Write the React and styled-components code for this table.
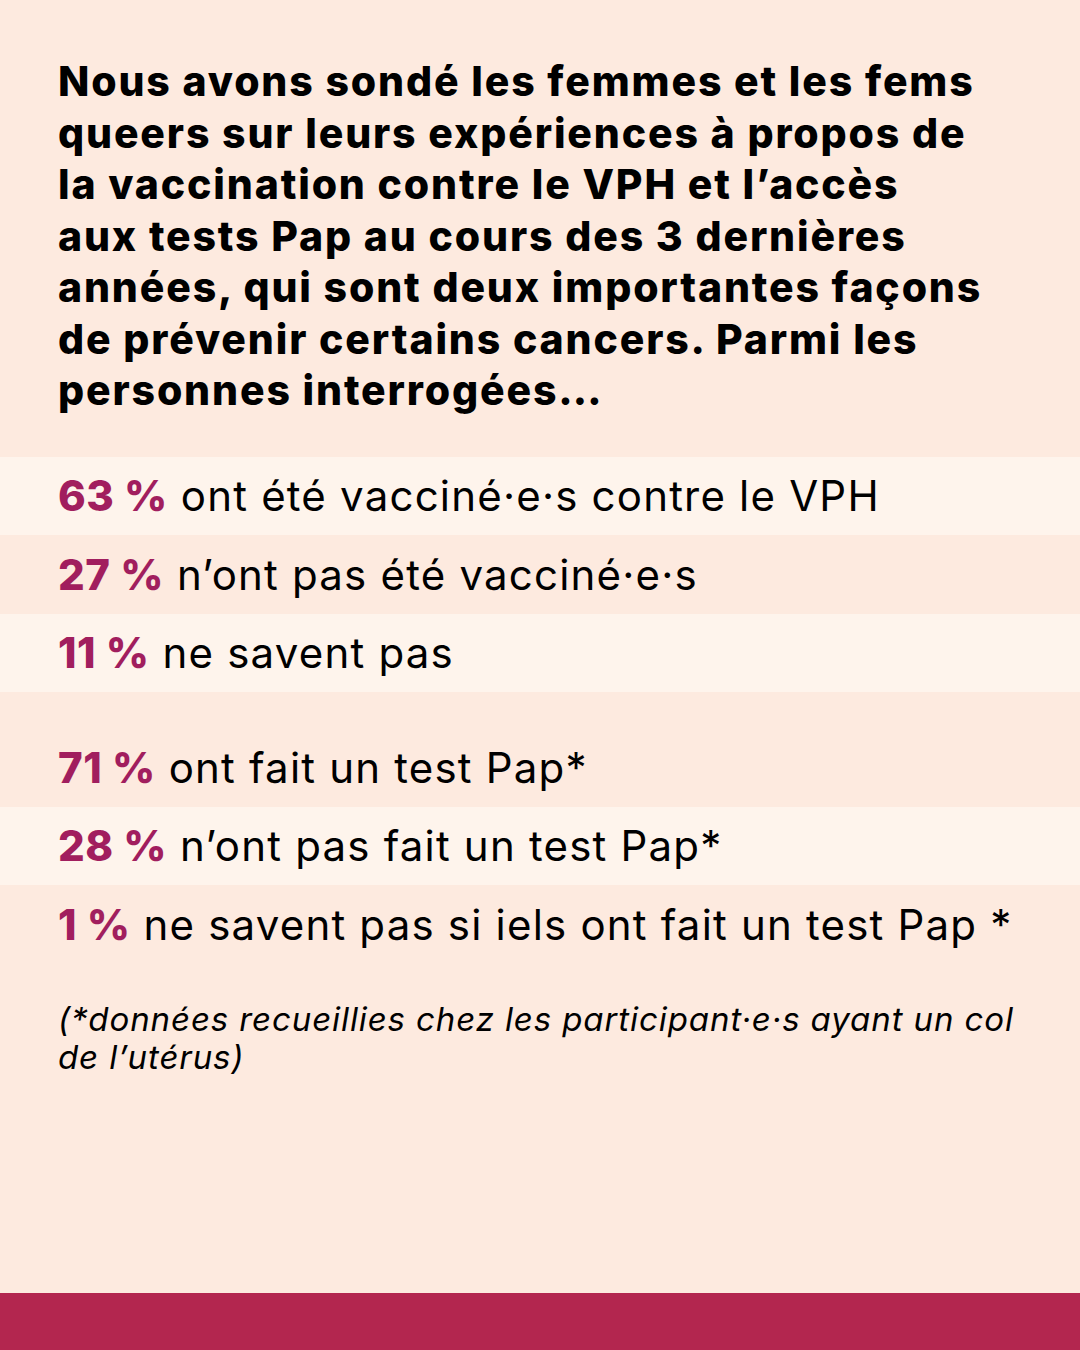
import React from "react";
import styled, { createGlobalStyle } from "styled-components";

const GlobalStyle = createGlobalStyle`
	html, body {
		margin: 0;
		padding: 0;
		background: #fdeadf;
	}
	* {
		box-sizing: border-box;
	}
`;

const stats = [
	[
		{ pct: "63 %", text: "ont été vacciné·e·s contre le VPH", light: true },
		{ pct: "27 %", text: "n’ont pas été vacciné·e·s", light: false },
		{ pct: "11 %", text: "ne savent pas", light: true },
	],
	[
		{ pct: "71 %", text: "ont fait un test Pap*", light: false },
		{ pct: "28 %", text: "n’ont pas fait un test Pap*", light: true },
		{ pct: "1 %", text: "ne savent pas si iels ont fait un test Pap *", light: false },
	],
];

function App() {
	return (
		<>
			<GlobalStyle />
			<Page>
				<Intro>
					Nous avons sondé les femmes et les fems
					<br />
					queers sur leurs expériences à propos de
					<br />
					la vaccination contre le VPH et l’accès
					<br />
					aux tests Pap au cours des 3 dernières
					<br />
					années, qui sont deux importantes façons
					<br />
					de prévenir certains cancers. Parmi les
					<br />
					personnes interrogées…
				</Intro>
				<Groups>
					{stats.map((group, gi) => (
						<Group key={gi}>
							{group.map((row) => (
								<Row key={row.pct} light={row.light}>
									<Pct>{row.pct}</Pct> {row.text}
								</Row>
							))}
						</Group>
					))}
				</Groups>
				<Note>
					(*données recueillies chez les participant·e·s ayant un col
					<br />
					de l’utérus)
				</Note>
				<Spacer />
				<Footer />
			</Page>
		</>
	);
}

const Page = styled.div`
	width: 1080px;
	height: 1350px;
	display: flex;
	flex-direction: column;
	background: #fdeadf;
	font-family: Inter, "Noto Sans", sans-serif;
	color: #000;
	overflow: hidden;
`;

const Intro = styled.h1`
	margin: 0;
	padding: 56px 58px 0;
	font-size: 41px;
	line-height: 51.5px;
	font-weight: 800;
	letter-spacing: 1.85px;
	white-space: nowrap;
`;

const Groups = styled.div`
	margin-top: 40px;
	display: flex;
	flex-direction: column;
	gap: 36px;
`;

const Group = styled.div`
	display: flex;
	flex-direction: column;
`;

const Row = styled.div`
	height: 78.5px;
	display: flex;
	align-items: center;
	gap: 13px;
	padding: 0 58px;
	background: ${(p) => (p.light ? "#fef4ec" : "#fdeadf")};
	font-size: 42px;
	font-weight: 400;
	letter-spacing: 1.2px;
	white-space: nowrap;
`;

const Pct = styled.span`
	color: #a11e5e;
	font-weight: 800;
	letter-spacing: 0.5px;
`;

const Note = styled.p`
	margin: 36px 0 0;
	padding: 0 58px;
	font-size: 33px;
	line-height: 38px;
	font-style: italic;
	font-weight: 400;
	letter-spacing: 0.9px;
	white-space: nowrap;
`;

const Spacer = styled.div`
	flex: 1;
`;

const Footer = styled.div`
	height: 57px;
	background: #b3264f;
`;

export default App;
